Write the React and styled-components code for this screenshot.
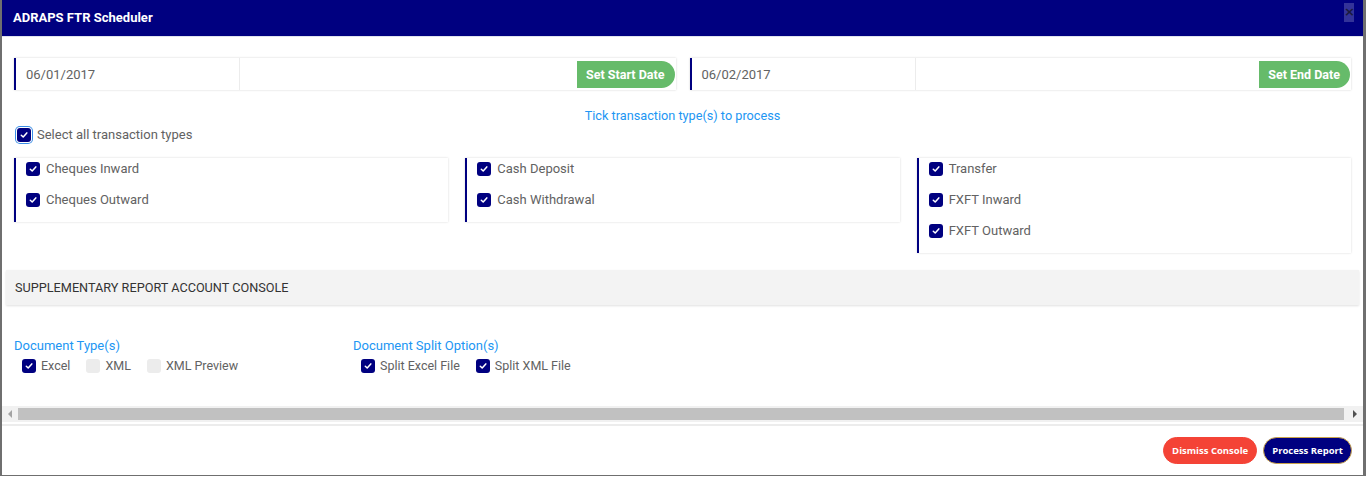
import React from 'react'
import styled, {createGlobalStyle} from 'styled-components'

const COLORS = {
  navy: '#000080',
  green: '#66bb6a',
  red: '#f44336',
  blue: '#2196f3',
  text: '#626262',
  line: '#e6e6e6'
}

const GlobalStyle = createGlobalStyle`
  html, body {
    margin: 0;
    padding: 0;
    background: #ffffff;
    font-family: Roboto, "Liberation Sans", Arial, sans-serif;
  }
  * { box-sizing: border-box; }
`

const Window = styled.div`
  width: 1366px;
  height: 476px;
  display: flex;
  flex-direction: column;
  background: #fff;
  border-left: 2px solid #6f6f6f;
  border-right: 3px solid #6f6f6f;
  border-bottom: 1px solid #6f6f6f;
`

const TitleBar = styled.header`
  height: 37px;
  flex: none;
  background: ${COLORS.navy};
  display: flex;
  align-items: center;
  justify-content: space-between;
  padding: 0 9px 2px 11px;
  border-bottom: 1px solid #dfe3ee;
`

const Title = styled.h1`
  margin: 0;
  font-size: 13px;
  font-weight: 700;
  color: #fff;
`

const CloseBox = styled.span`
  width: 10px;
  height: 19px;
  margin-top: -9px;
  background: rgba(255, 255, 255, 0.2);
  color: #1a1a3a;
  font-size: 13px;
  font-weight: 700;
  line-height: 18px;
  text-align: center;
  font-family: "DejaVu Sans", sans-serif;
`

const Body = styled.main`
  flex: 1;
  padding: 21px 4px 0 4px;
  display: flex;
  flex-direction: column;
`

const Inner = styled.div`
  padding: 0 8px;
`

const DateRow = styled.div`
  display: grid;
  grid-template-columns: 1fr 1fr;
  gap: 14px;
`

const DateGroup = styled.div`
  height: 32px;
  display: flex;
  align-items: center;
  border-left: 2px solid ${COLORS.navy};
  box-shadow: 0 0 2px rgba(0, 0, 0, 0.18);
  background: #fff;
`

const DateField = styled.div`
  width: 224px;
  height: 100%;
  display: flex;
  align-items: center;
  padding-left: 10px;
  font-size: 13px;
  color: ${COLORS.text};
  border-right: 1px solid #ececec;
`

const Spacer = styled.div`
  flex: 1;
`

const DateButton = styled.button`
  height: 27px;
  margin-right: 1px;
  padding: 0 10px 0 9px;
  border: none;
  border-radius: 0 14px 14px 0;
  background: ${COLORS.green};
  color: #fff;
  font-family: inherit;
  font-size: 12.5px;
  font-weight: 700;
`

const Hint = styled.div`
  margin-top: 18px;
  text-align: center;
  font-size: 12.7px;
  color: ${COLORS.blue};
  line-height: 16px;
`

const SelectAll = styled.label`
  display: flex;
  align-items: center;
  gap: 6px;
  margin-top: 3px;
  padding-left: 3px;
  font-size: 13px;
  color: ${COLORS.text};
  line-height: 16px;
`

const Box = styled.span`
  width: 14px;
  height: 14px;
  flex: none;
  border-radius: 3px;
  display: flex;
  align-items: center;
  justify-content: center;
  background: ${p => (p.$checked ? COLORS.navy : '#ececec')};
  box-shadow: ${p => (p.$focus ? '0 0 0 1px #fff, 0 0 0 2px #3a8ee6' : 'none')};
`

const Check = ({checked, focus}) => (
  <Box $checked={checked} $focus={focus}>
    {checked && (
      <svg width='8' height='8' viewBox='0 0 8 8'>
        <path d='M1.3 4.2 L3.2 6 L6.8 1.9' fill='none' stroke='#fff' strokeWidth='1.5' strokeLinecap='round' strokeLinejoin='round' />
      </svg>
    )}
  </Box>
)

const Panels = styled.div`
  margin-top: 15px;
  display: grid;
  grid-template-columns: repeat(3, 1fr);
  gap: 17px;
  align-items: start;
`

const Panel = styled.div`
  border-left: 2px solid ${COLORS.navy};
  box-shadow: 0 0 2px rgba(0, 0, 0, 0.16);
  padding: 2px 0 0 10px;
`

const Option = styled.label`
  height: 31px;
  display: flex;
  align-items: flex-start;
  gap: 6px;
  font-size: 13px;
  line-height: 18px;
  color: ${COLORS.text};
  & > span:first-child { margin-top: 2px; }
`

const SectionBar = styled.div`
  margin-top: 17px;
  height: 35px;
  display: flex;
  align-items: center;
  padding-left: 9px;
  background: #f3f3f3;
  box-shadow: 0 1px 2px rgba(0, 0, 0, 0.12);
  font-size: 12.7px;
  color: #333;
  text-transform: uppercase;
`

const DocRow = styled.div`
  margin-top: 33px;
  padding-left: 8px;
  display: flex;
`

const DocGroup = styled.div`
  width: ${p => p.$width}px;
  display: flex;
  flex-direction: column;
`

const DocTitle = styled.div`
  font-size: 13px;
  line-height: 16px;
  color: ${COLORS.blue};
`

const DocOptions = styled.div`
  margin-top: 4px;
  padding-left: 8px;
  display: flex;
  gap: 16px;
`

const DocOption = styled.label`
  display: flex;
  align-items: center;
  gap: 5px;
  font-size: 12.5px;
  line-height: 16px;
  color: ${COLORS.text};
`

const ScrollBar = styled.div`
  margin: auto -4px 0 -4px;
  height: 16px;
  display: flex;
  align-items: center;
  background: #f1f1f1;
`

const Arrow = styled.span`
  width: 16px;
  height: 16px;
  flex: none;
  display: flex;
  align-items: center;
  justify-content: center;
  &::before {
    content: '';
    border-top: 4px solid transparent;
    border-bottom: 4px solid transparent;
    ${p => (p.$dir === 'left' ? 'border-right: 4px solid #a3a3a3;' : 'border-left: 4px solid #505050;')}
  }
`

const Thumb = styled.div`
  flex: 1;
  height: 12px;
  margin-right: 3px;
  background: #c1c1c1;
`

const Footer = styled.footer`
  height: 51px;
  flex: none;
  border-top: 2px solid #ececec;
  margin-top: 2px;
  display: flex;
  align-items: center;
  justify-content: flex-end;
  gap: 6px;
  padding: 0 11px 0 0;
`

const FooterButton = styled.button`
  height: 27px;
  padding: 0 ${p => p.$pad}px;
  border-radius: 14px;
  border: 1px solid ${p => (p.$primary ? '#c9a24a' : COLORS.red)};
  background: ${p => (p.$primary ? COLORS.navy : COLORS.red)};
  color: #fff;
  font-family: "Open Sans", Roboto, sans-serif;
  font-size: 9.5px;
  font-weight: 700;
`

const panels = [
  ['Cheques Inward', 'Cheques Outward'],
  ['Cash Deposit', 'Cash Withdrawal'],
  ['Transfer', 'FXFT Inward', 'FXFT Outward']
]

const App = () => (
  <Window>
    <GlobalStyle />
    <TitleBar>
      <Title>ADRAPS FTR Scheduler</Title>
      <CloseBox>×</CloseBox>
    </TitleBar>
    <Body>
      <Inner>
        <DateRow>
          <DateGroup>
            <DateField>06/01/2017</DateField>
            <Spacer />
            <DateButton>Set Start Date</DateButton>
          </DateGroup>
          <DateGroup>
            <DateField>06/02/2017</DateField>
            <Spacer />
            <DateButton>Set End Date</DateButton>
          </DateGroup>
        </DateRow>
        <Hint>Tick transaction type(s) to process</Hint>
        <SelectAll>
          <Check checked focus />
          Select all transaction types
        </SelectAll>
        <Panels>
          {panels.map((items, i) => (
            <Panel key={i}>
              {items.map(item => (
                <Option key={item}>
                  <Check checked />
                  <span>{item}</span>
                </Option>
              ))}
            </Panel>
          ))}
        </Panels>
      </Inner>
      <SectionBar>Supplementary Report Account Console</SectionBar>
      <DocRow>
        <DocGroup $width={339}>
          <DocTitle>Document Type(s)</DocTitle>
          <DocOptions>
            <DocOption><Check checked />Excel</DocOption>
            <DocOption><Check />XML</DocOption>
            <DocOption><Check />XML Preview</DocOption>
          </DocOptions>
        </DocGroup>
        <DocGroup $width={400}>
          <DocTitle>Document Split Option(s)</DocTitle>
          <DocOptions>
            <DocOption><Check checked />Split Excel File</DocOption>
            <DocOption><Check checked />Split XML File</DocOption>
          </DocOptions>
        </DocGroup>
      </DocRow>
      <ScrollBar>
        <Arrow $dir='left' />
        <Thumb />
        <Arrow $dir='right' />
      </ScrollBar>
    </Body>
    <Footer>
      <FooterButton $pad={8}>Dismiss Console</FooterButton>
      <FooterButton $primary $pad={8}>Process Report</FooterButton>
    </Footer>
  </Window>
)

export default App
